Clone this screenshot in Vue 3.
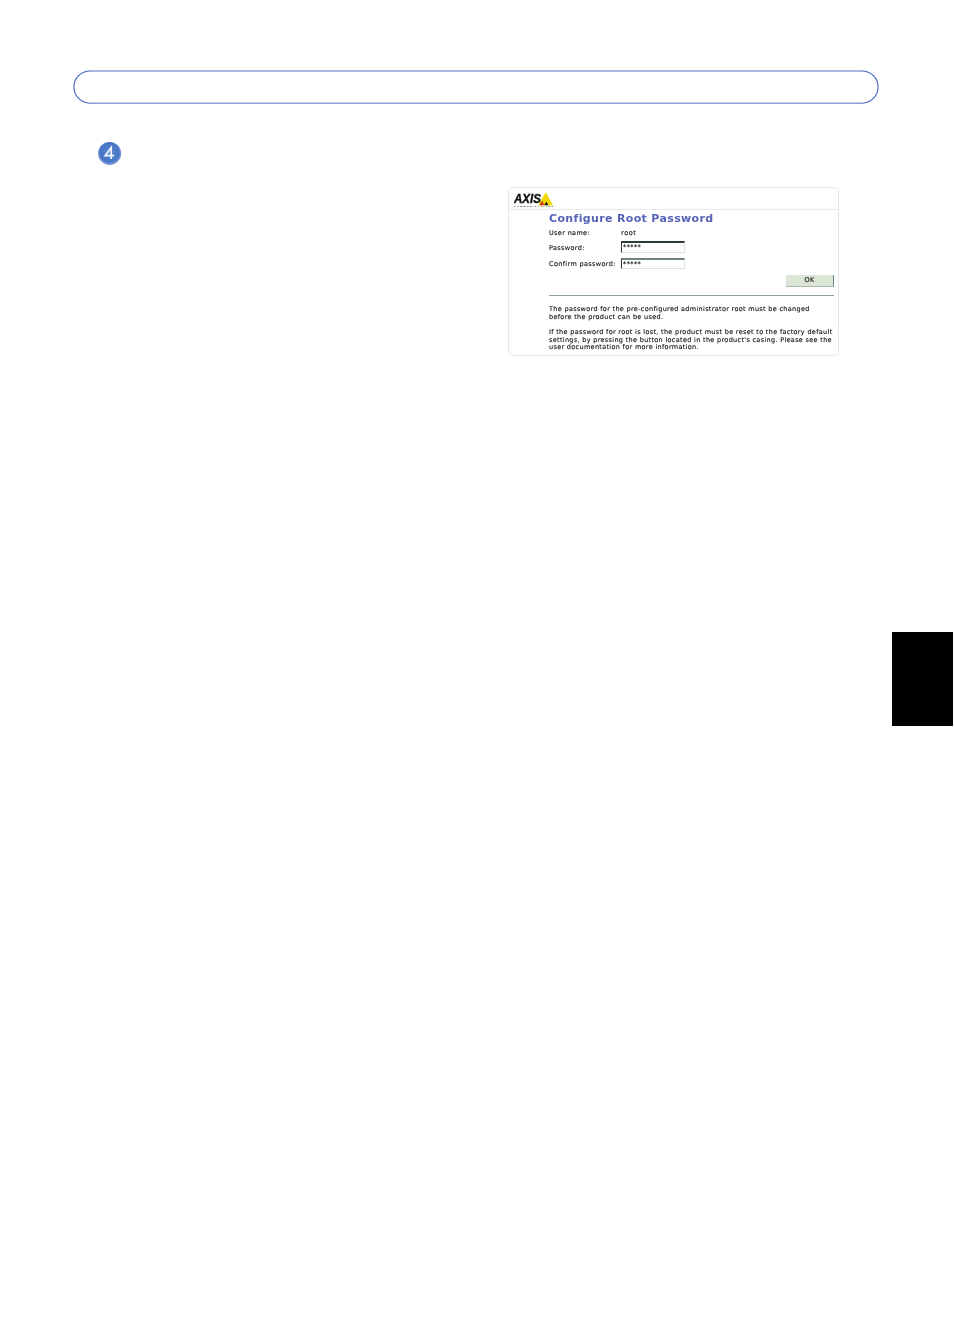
<script setup>
const fields = [
  { label: 'Password:', value: '*****' },
  { label: 'Confirm password:', value: '*****' }
]
</script>

<template>
  <div class="page">
    <svg class="pill" width="806" height="35" viewBox="0 0 806 35">
      <path d="M17 1H789M17 33.2H789" fill="none" stroke="#8c9fd8" stroke-width="1.6" />
      <path d="M17 1A16.1 16.1 0 0 0 17 33.2M789 1A16.1 16.1 0 0 1 789 33.2" fill="none" stroke="#3f60bf" stroke-width="1.1" />
    </svg>
    <div class="step">
      <svg class="badge" width="26" height="26" viewBox="0 0 26 26">
        <defs>
          <radialGradient id="ball" cx="50%" cy="45%" r="55%">
            <stop offset="0%" stop-color="#5f8ad4" />
            <stop offset="72%" stop-color="#4674c4" />
            <stop offset="100%" stop-color="#7ea0dc" />
          </radialGradient>
        </defs>
        <circle cx="12.6" cy="11.4" r="11.5" fill="url(#ball)" />
        <path d="M14.2 17V5.6L8.2 13.6H17.2" fill="none" stroke="#f4f7fd" stroke-width="1.7" />
      </svg>
    </div>
    <div class="shot-row">
      <div class="shot">
        <div class="shot-head">
          <svg class="logo" width="41" height="17" viewBox="0 0 41 17">
            <path d="M24 14.3L31.8 1.2L39 14.3Z" fill="#f2d800" />
            <path d="M25.5 14.3L28.3 9.6L30 14.3Z" fill="#d8281c" />
            <path d="M30 14.3L32.5 10.4L34.4 14.3Z" fill="#1a1a1a" />
            <text x="0" y="12.4" class="logo-word" textLength="27" lengthAdjust="spacingAndGlyphs">AXIS</text>
            <text x="0" y="15.8" class="logo-sub" textLength="39" lengthAdjust="spacing">COMMUNICATIONS</text>
          </svg>
        </div>
        <div class="shot-body">
          <h1>Configure Root Password</h1>
          <div class="line user"><span class="lab">User name:</span><span>root</span></div>
          <div v-for="f in fields" :key="f.label" class="line field">
            <span class="lab">{{ f.label }}</span>
            <span class="input">{{ f.value }}</span>
          </div>
          <div class="actions"><span class="ok">OK</span></div>
          <hr />
          <p>The password for the pre-configured administrator root must be changed<br />before the product can be used.</p>
          <p class="second">If the password for root is lost, the product must be reset to the factory default<br />settings, by pressing the button located in the product's casing. Please see the<br />user documentation for more information.</p>
        </div>
      </div>
    </div>
    <div class="tab"></div>
  </div>
</template>

<style scoped>
.page {
  width: 954px;
  height: 1336px;
  padding-top: 70px;
  box-sizing: border-box;
  background: #fff;
  font-family: "DejaVu Sans", sans-serif;
  overflow: hidden;
}
.pill {
  display: block;
  margin-left: 73px;
}
.step {
  margin: 37px 0 0 97px;
  height: 24px;
}
.badge {
  display: block;
}
.shot-row {
  margin: 21px 0 0 508px;
}
.shot {
  box-sizing: border-box;
  width: 331px;
  height: 169px;
  border: 1px solid #e6e8e6;
  border-radius: 5px;
  color: #111;
  font-size: 6.5px;
  line-height: 7px;
  -webkit-text-stroke: 0.12px #111;
  filter: blur(0.25px);
}
.shot-head {
  height: 22px;
  border-bottom: 1px solid #e8ebe8;
  padding: 3px 0 0 5px;
  box-sizing: border-box;
}
.logo {
  display: block;
}
.logo-word {
  font-family: "Liberation Sans", sans-serif;
  font-weight: 700;
  font-style: italic;
  font-size: 12.5px;
  fill: #111;
  stroke: #111;
  stroke-width: 0.4px;
}
.logo-sub {
  font-family: "Liberation Sans", sans-serif;
  font-weight: 700;
  font-size: 2.4px;
  fill: #222;
  stroke: none;
}
.shot-body {
  padding-left: 40px;
  padding-right: 4px;
}
h1 {
  margin: 2px 0 0;
  font-size: 11px;
  line-height: 14px;
  font-weight: 700;
  color: #5563b8;
  -webkit-text-stroke: 0;
  letter-spacing: 0.35px;
}
.line {
  display: flex;
  align-items: center;
}
.lab {
  width: 72px;
  flex: none;
  letter-spacing: 0.35px;
}
.user {
  margin-top: 4px;
}
.user span:last-child {
  letter-spacing: 0.6px;
}
.user + .field {
  margin-top: 4px;
}
.field {
  margin-top: 5px;
}
.field .lab {
  padding-top: 2px;
}
.input {
  box-sizing: border-box;
  width: 64px;
  height: 12px;
  border: 1px solid #dfe3dc;
  border-top: 2px solid #2c3a38;
  border-left: 1px solid #2c3a38;
  line-height: 7px;
  padding: 1px 0 0 1px;
  letter-spacing: 0.4px;
}
.field + .field .input {
  height: 11px;
  border-top-color: #6f8080;
}
.actions {
  display: flex;
  justify-content: flex-end;
  margin-top: 6px;
}
.ok {
  box-sizing: border-box;
  width: 48px;
  height: 12px;
  background: #dce6d6;
  border-right: 1px solid #6f8a80;
  border-bottom: 1px solid #a8b8ac;
  text-align: center;
  line-height: 11px;
  letter-spacing: 0.4px;
}
hr {
  margin: 8px 0 0;
  border: 0;
  border-top: 1px solid #8fa09c;
}
p {
  margin: 10px 0 0;
  font-size: 6.5px;
  line-height: 7.5px;
  letter-spacing: 0.32px;
  white-space: nowrap;
}
.second {
  margin-top: 8px;
}
.tab {
  width: 61px;
  height: 94px;
  margin: 276px 0 0 892px;
  background: #000;
}
</style>
